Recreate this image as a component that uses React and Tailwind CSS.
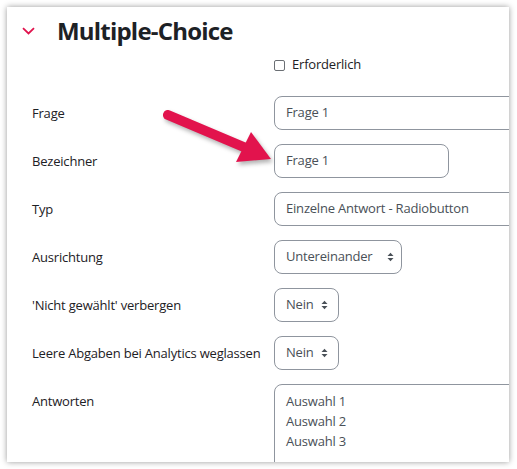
import React from "react";

const font = { fontFamily: '"Open Sans", "Noto Sans", Arial, sans-serif' };

function SelectIcon() {
  return (
    <svg width="7" height="10" viewBox="0 0 7 10" className="shrink-0">
      <path d="M0.5 4 L3.5 0.8 L6.5 4 Z" fill="#495057" />
      <path d="M0.5 6 L3.5 9.2 L6.5 6 Z" fill="#495057" />
    </svg>
  );
}

function Row({ label, children }) {
  return (
    <div className="flex items-start">
      <div className="w-[242px] shrink-0 pt-[8px] text-[13px] leading-[18px] tracking-[-0.2px] text-[#1d2125] whitespace-nowrap">
        {label}
      </div>
      {children}
    </div>
  );
}

function Input({ value, w }) {
  return (
    <div
      className={`${w} h-[34px] shrink-0 rounded-lg border border-[#8f959e] bg-white pl-[11px] flex items-center text-[13px] tracking-[-0.2px] text-[#495057] whitespace-nowrap`}
    >
      {value}
    </div>
  );
}

function Select({ value, w, gap }) {
  return (
    <div
      className={`${w} h-[34px] shrink-0 rounded-lg border border-[#8f959e] bg-white pl-[11px] flex items-center text-[13px] tracking-[-0.2px] text-[#495057] whitespace-nowrap`}
    >
      <span>{value}</span>
      <span className={gap}>
        <SelectIcon />
      </span>
    </div>
  );
}

export default function App() {
  return (
    <div className="relative w-[517px] h-[469px] overflow-hidden bg-white pt-[7px] pl-[7px] pr-[8px] pb-[7px]" style={font}>
      <div className="h-full w-full overflow-hidden bg-white shadow-[0_0_6px_rgba(0,0,0,0.4)]">
        <div className="flex items-center h-[36px] mt-[6px] pl-[15px]">
          <svg width="13" height="8" viewBox="0 0 13 8" className="shrink-0">
            <path d="M1 1.2 L6.5 6.5 L12 1.2" fill="none" stroke="#e0134d" strokeWidth="1.8" />
          </svg>
          <span className="ml-[22px] text-[24px] font-bold text-[#1d2125] leading-none tracking-[-0.8px]">
            Multiple-Choice
          </span>
        </div>

        <div className="pl-[25px]">
          <div className="flex items-center h-[18px] mt-[7px] mb-[22px] pl-[242px]">
            <span className="w-[11px] h-[11px] border border-[#6b6f74] rounded-[2px] bg-white shrink-0" />
            <span className="ml-[7px] text-[13px] tracking-[-0.2px] text-[#1d2125]">Erforderlich</span>
          </div>

          <div className="flex flex-col gap-[14px]">
            <Row label="Frage">
              <Input value="Frage 1" w="w-[300px]" />
            </Row>
            <Row label="Bezeichner">
              <Input value="Frage 1" w="w-[175px]" />
            </Row>
            <Row label="Typ">
              <Input value="Einzelne Antwort - Radiobutton" w="w-[300px]" />
            </Row>
            <Row label="Ausrichtung">
              <Select value="Untereinander" w="w-[128px]" gap="ml-[15px]" />
            </Row>
            <Row label="'Nicht gewählt' verbergen">
              <Select value="Nein" w="w-[65px]" gap="ml-[7px]" />
            </Row>
            <Row label="Leere Abgaben bei Analytics weglassen">
              <Select value="Nein" w="w-[65px]" gap="ml-[7px]" />
            </Row>
            <Row label="Antworten">
              <div className="w-[300px] h-[120px] shrink-0 rounded-lg border border-[#8f959e] bg-white pl-[11px] pt-[6px] text-[13px] leading-[20px] tracking-[-0.2px] text-[#495057]">
                <div>Auswahl 1</div>
                <div>Auswahl 2</div>
                <div>Auswahl 3</div>
              </div>
            </Row>
          </div>
        </div>
      </div>

      <svg
        className="absolute left-0 top-0 pointer-events-none"
        width="517"
        height="469"
        viewBox="0 0 517 469"
        style={{ filter: "drop-shadow(2px 3px 2px rgba(0,0,0,0.3))" }}
      >
        <line x1="168" y1="115" x2="246" y2="148" stroke="#e2134d" strokeWidth="10" strokeLinecap="round" />
        <polygon points="251,132 271,159 236,162" fill="#e2134d" />
      </svg>
    </div>
  );
}
